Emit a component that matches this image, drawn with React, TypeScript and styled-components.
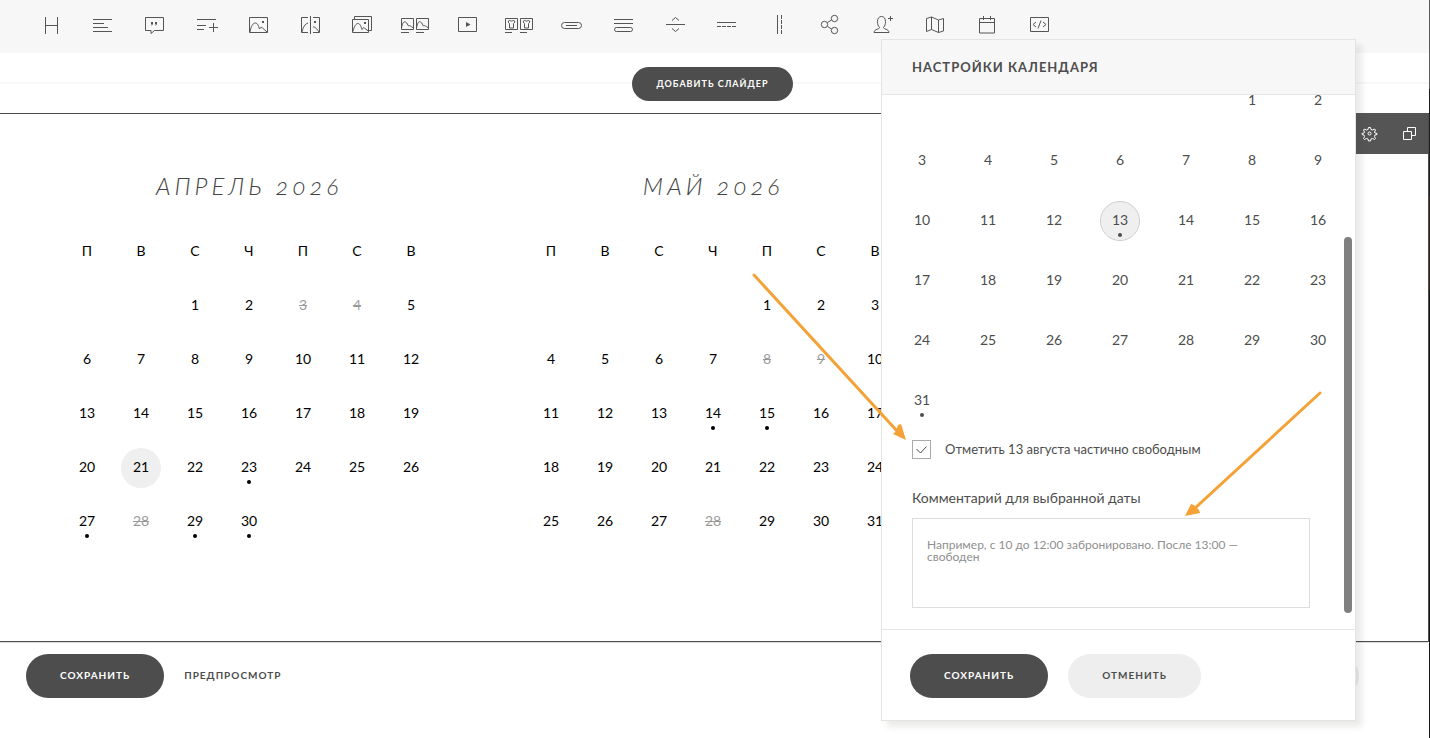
import React, { useState } from "react";
import styled, { createGlobalStyle } from "styled-components";

const GlobalStyle = createGlobalStyle`
  *, *::before, *::after { box-sizing: border-box; }
  body {
    margin: 0;
    background: #fff;
    color: #4d4d4d;
    font-family: Lato, "Open Sans", "Liberation Sans", sans-serif;
    font-size: 14px;
  }
  button { font-family: inherit; border: 0; padding: 0; cursor: pointer; }
`;

const Page = styled.div`
  position: relative;
  min-height: 100vh;
  overflow: hidden;
  padding-right: 1px;
  background: linear-gradient(#5c5c5c 0 89px, #1d1d1d 89px 196px, #3a2420 196px 290px, #151515 290px) right / 1px 100% no-repeat;
`;

const Toolbar = styled.header`
  display: flex;
  height: 53px;
  padding-left: 26px;
  background: #f7f7f7;
`;

const ToolButton = styled.button`
  width: 52px;
  height: 50px;
  background: none;
  color: #555;

  svg {
    display: block;
    fill: none;
    stroke: currentColor;
    stroke-width: 1;
  }
`;

const SliderBar = styled.div`
  display: flex;
  align-items: center;
  justify-content: center;
  height: 60px;
  padding: 2px 4px 0 0;
  background: linear-gradient(#f7f7f7, #f7f7f7) 0 29px / 100% 2px no-repeat;
`;

const PillButton = styled.button<{ $tone?: "dark" | "light"; $small?: boolean }>`
  height: ${(p) => (p.$small ? 34 : 44)}px;
  padding: 0 ${(p) => (p.$small ? 24 : 34)}px 2px;
  border-radius: 22px;
  background: ${(p) => (p.$tone === "light" ? "#eee" : "#4d4d4d")};
  color: ${(p) => (p.$tone === "light" ? "#4d4d4d" : "#fff")};
  font-size: ${(p) => (p.$small ? 9 : 10)}px;
  font-weight: 700;
  letter-spacing: 1px;
  text-transform: uppercase;
  white-space: nowrap;
`;

const Section = styled.section`
  position: relative;
  min-height: 529px;
  padding: 54px 0 60px 60px;
  border: 1px solid #4d4d4d;
  border-left: 0;
`;

const Months = styled.div`
  display: flex;
  gap: 86px;
`;

const Month = styled.div`
  flex: none;
  width: 378px;
`;

const MonthTitle = styled.h2`
  margin: 0 0 20px;
  color: #444;
  font-size: 24px;
  font-style: italic;
  font-weight: 300;
  font-variant-numeric: oldstyle-nums;
  line-height: 36px;
  letter-spacing: 4px;
  text-align: center;
  text-transform: uppercase;
`;

const Grid = styled.table<{ $col: number; $row: number }>`
  width: ${(p) => p.$col * 7}px;
  border-collapse: collapse;
  table-layout: fixed;

  th, td {
    height: ${(p) => p.$row}px;
    padding: 0;
    font-weight: 400;
    text-align: center;
    vertical-align: middle;
  }
  th { padding-bottom: 2px; }
  td { padding-top: 2px; }
`;

const Weekday = styled.span`
  color: #000;
  font-size: 14px;
`;

const Day = styled.button<{ $busy?: boolean; $partial?: boolean; $active?: boolean; $outlined?: boolean }>`
  position: relative;
  display: block;
  width: 40px;
  height: 40px;
  margin: 0 auto;
  padding-bottom: 3px;
  border: 1px solid ${(p) => (p.$outlined ? "#ccc" : "transparent")};
  border-radius: 50%;
  background: ${(p) => (p.$active ? "#efefef" : "none")};
  background-clip: ${(p) => (p.$outlined ? "padding-box" : "border-box")};
  color: inherit;
  font-size: 14px;
  line-height: 20px;
  opacity: ${(p) => (p.$busy ? 0.4 : 1)};
  text-decoration: ${(p) => (p.$busy ? "line-through" : "none")};

  &::after {
    content: ${(p) => (p.$partial ? '""' : "none")};
    position: absolute;
    left: 17px;
    bottom: 3px;
    width: 4px;
    height: 4px;
    border-radius: 50%;
    background: currentColor;
  }
`;

const PublicGrid = styled(Grid)`
  color: #000;
`;

const BlockTools = styled.div`
  position: absolute;
  top: -1px;
  right: 0;
  display: flex;
  background: #555;
`;

const BlockTool = styled.button`
  width: 40px;
  height: 41px;
  background: none;
  color: #fff;

  svg {
    display: block;
    fill: none;
    stroke: currentColor;
  }
`;

const BottomBar = styled.footer`
  display: flex;
  align-items: center;
  gap: 20px;
  margin-right: 1px;
  padding: 11px 69px 40px 26px;
  border-top: 1px solid #ddd;
`;

const TextLink = styled.a`
  padding-bottom: 2px;
  color: #4d4d4d;
  font-size: 10px;
  font-weight: 700;
  letter-spacing: 1px;
  text-decoration: none;
  text-transform: uppercase;
`;

const Spacer = styled.div`
  flex: 1;
`;

const Panel = styled.aside`
  position: absolute;
  top: 39px;
  right: 74px;
  display: flex;
  flex-direction: column;
  width: 475px;
  height: 682px;
  border: 1px solid #e4e4e4;
  background: #fff;
  box-shadow: 6px 6px 6px rgba(60, 60, 40, 0.1);
`;

const PanelHeader = styled.h1`
  margin: 0;
  padding: 0 30px;
  border-bottom: 1px solid #e4e4e4;
  background: #f7f7f7;
  font-size: 13px;
  font-weight: 700;
  line-height: 54px;
  letter-spacing: 1px;
  text-transform: uppercase;
`;

const PanelBody = styled.div`
  position: relative;
  display: flex;
  flex: 1;
  flex-direction: column;
  justify-content: flex-end;
  min-height: 0;
  overflow: hidden;
  padding-bottom: 21px;

  > * { flex: none; }
`;

const PanelGridWrap = styled.div`
  padding-left: 7px;
`;

const ScrollThumb = styled.div`
  position: absolute;
  right: 3px;
  bottom: 16px;
  width: 8px;
  height: 376px;
  border-radius: 4px;
  background: #808080;
`;

const CheckRow = styled.label`
  display: flex;
  align-items: center;
  gap: 14px;
  margin: 10px 30px 0;
  font-size: 13px;
  line-height: 19px;
`;

const CheckBox = styled.span`
  display: grid;
  width: 19px;
  height: 19px;

  input, svg { grid-area: 1 / 1; }
  input {
    appearance: none;
    width: 19px;
    height: 19px;
    margin: 0;
    border: 1px solid #aaa;
  }
  svg {
    fill: none;
    stroke: #4d4d4d;
    pointer-events: none;
    visibility: hidden;
  }
  input:checked + svg { visibility: visible; }
`;

const FieldLabel = styled.label`
  margin: 29px 30px 0;
  font-size: 14px;
  line-height: 20px;
`;

const Comment = styled.textarea`
  display: block;
  width: 398px;
  height: 90px;
  margin: 10px 30px 0;
  padding: 20px 50px 0 14px;
  border: 1px solid #ddd;
  border-radius: 0;
  outline: 0;
  background: #fff;
  color: #4d4d4d;
  font-family: inherit;
  font-size: 12px;
  line-height: 12px;
  resize: none;

  &::placeholder { color: #8f8f8f; opacity: 1; }
`;

const PanelFooter = styled.div`
  display: flex;
  gap: 20px;
  padding: 24px 28px 22px;
  border-top: 1px solid #e4e4e4;
`;

const Arrows = styled.svg`
  position: absolute;
  top: 260px;
  right: 99px;
  pointer-events: none;
`;

const hill = "M0 0c1-5 3-8 5-8s3 3 4 6c1-2 2-2 3-1s3 2 4 3";
const smallHill = "M0 1c1-5 2-7 4-6s2 3 3 4c1-1 2 0 5 2";
const shirt = "M2 .5L.5 2.500l1.500 1.500v4.500h4V4l1.500-1.500L6 .5C5.500 2 2.500 2 2 .5z";

const tools: { name: string; art: React.ReactNode }[] = [
  { name: "Заголовок", art: <path d="M19.500 17v17M31.500 17v17M19.500 25.500h12" /> },
  { name: "Текст", art: <path d="M15 19.500h19M15 23.500h11M15 27.500h15M15 31.500h19" /> },
  {
    name: "Цитата",
    art: (
      <>
        <path d="M15.500 17.500h18v13h-9l-3.500 3v-3h-5.500z" />
        <path d="M21 22h2v2l-1.500 2v-2H21zM25 22h2v2l-1.500 2v-2H25z" fill="currentColor" stroke="none" />
      </>
    ),
  },
  { name: "Список", art: <path d="M15 19.500h19M15 25.500h9M15 29.500h7M27 27.500h9M31.500 23v9" /> },
  {
    name: "Изображение",
    art: (
      <>
        <path d="M15.500 17.500h18v15h-18z" />
        <path d="M16 32c1-6 3-9 5.500-9 2 0 3 3 4 6 1-2 2-2 3-1l4.500 4" />
        <path d="M28 21h2v2h-2z" fill="currentColor" stroke="none" />
      </>
    ),
  },
  {
    name: "Сравнение",
    art: (
      <>
        <path d="M22 17.500h-6.500v15H22M27 17.500h6.500v15H27M24.500 16v18M16 32c1-5 3-8 6-9M27 27c2-.5 4 2 6 5" />
        <path d="M28 21h2v2h-2z" fill="currentColor" stroke="none" />
      </>
    ),
  },
  {
    name: "Галерея",
    art: (
      <>
        <path d="M14.500 19.500h16v13h-16zM16.500 19v-2.500h17v14H31" />
        <path d={hill} transform="translate(15 31.500)" />
        <path d="M26 22h2v2h-2z" fill="currentColor" stroke="none" />
      </>
    ),
  },
  {
    name: "Карточки",
    art: (
      <>
        <path d="M11.500 18.500h12v11h-12zM26.500 18.500h12v11h-12zM11 32.500h8M26 32.500h8" />
        <path d={smallHill} transform="translate(11.500 27)" />
        <path d={smallHill} transform="translate(26.500 27)" />
      </>
    ),
  },
  {
    name: "Видео",
    art: (
      <>
        <path d="M16.500 17.500h18v14h-18z" />
        <path d="M24 22l4.500 2.500L24 27z" fill="currentColor" stroke="none" />
      </>
    ),
  },
  {
    name: "Товары",
    art: (
      <>
        <path d="M11.500 18.500h12v11h-12zM26.500 18.500h12v11h-12zM11 32.500h7M26 32.500h7" />
        <path d={shirt} transform="translate(13.500 19.500)" />
        <path d={shirt} transform="translate(28.500 19.500)" />
      </>
    ),
  },
  {
    name: "Кнопка",
    art: (
      <>
        <rect x="15.500" y="22.500" width="20" height="6" rx="3" />
        <path d="M20 25.500h11" />
      </>
    ),
  },
  {
    name: "Форма",
    art: (
      <>
        <path d="M16 19.500h19M16 23.500h19" />
        <rect x="16.500" y="27.500" width="18" height="4" rx="2" />
      </>
    ),
  },
  { name: "Отступ", art: <path d="M16 24.500h19M22 20.500l3.500-3 3.500 3M22 28.500l3.500 3 3.500-3" /> },
  { name: "Разделитель", art: <path d="M15 22.500h19M15 26.500h4M20 26.500h4M25 26.500h4M30 26.500h4" /> },
  { name: "Колонки", art: <path d="M23.500 15v19M27.500 15v4M27.500 20v4M27.500 25v4M27.500 30v4" /> },
  {
    name: "Соцсети",
    art: (
      <>
        <circle cx="18.500" cy="24.500" r="3.200" />
        <circle cx="28.500" cy="18.500" r="3.200" />
        <circle cx="28.500" cy="30.500" r="3.200" />
        <path d="M21.500 22.500l4-2.500M21.500 26.500l4 2.500" />
      </>
    ),
  },
  {
    name: "Подписка",
    art: (
      <path d="M21.500 27.500c-1.500-2-2-3-2-6 0-3 1.500-5 4-5s4 2 4 5c0 3-.5 4-2 6 0 2 5 1 5.500 5H16c.5-4 5.500-3 5.500-5zM30 18.500h5M32.500 16v5" />
    ),
  },
  { name: "Карта", art: <path d="M16.500 18.500l5-1.500 7 3 5-1.500v12.500l-5 1.500-7-3-5 2zM21.500 17v12.500M28.500 20v12.500" /> },
  { name: "Календарь", art: <path d="M17.500 18.500h15v14.500h-15zM17.500 22.500h15M21.500 16v4M28.500 16v4" /> },
  {
    name: "HTML",
    art: <path d="M16.500 17.500h18v14h-18zM22 22l-3 2.500 3 2.500M29 22l3 2.500-3 2.500M27 20.500l-3 8" />,
  },
];

type MonthData = { title: string; offset: number; days: number; busy: number[]; partial: number[]; active?: number };

const months: MonthData[] = [
  { title: "Апрель 2026", offset: 2, days: 30, busy: [3, 4, 28], partial: [23, 27, 29, 30], active: 21 },
  { title: "Май 2026", offset: 4, days: 31, busy: [8, 9, 28], partial: [14, 15] },
];

const weekdays = ["П", "В", "С", "Ч", "П", "С", "В"];

function weeksOf(offset: number, days: number): (number | null)[][] {
  const count = Math.ceil((offset + days) / 7);
  return Array.from({ length: count }, (_, w) =>
    Array.from({ length: 7 }, (_, d) => {
      const n = w * 7 + d - offset + 1;
      return n > 0 && n <= days ? n : null;
    })
  );
}

function MonthView({ data }: { data: MonthData }) {
  return (
    <Month>
      <MonthTitle>{data.title}</MonthTitle>
      <PublicGrid $col={54} $row={54}>
        <thead>
          <tr>
            {weekdays.map((d, i) => (
              <th key={i} scope="col"><Weekday>{d}</Weekday></th>
            ))}
          </tr>
        </thead>
        <tbody>
          {weeksOf(data.offset, data.days).map((week, w) => (
            <tr key={w}>
              {week.map((n, i) => (
                <td key={i}>
                  {n && (
                    <Day $busy={data.busy.includes(n)} $partial={data.partial.includes(n)} $active={data.active === n}>
                      {n}
                    </Day>
                  )}
                </td>
              ))}
            </tr>
          ))}
        </tbody>
      </PublicGrid>
    </Month>
  );
}

function SettingsPanel() {
  const [selected, setSelected] = useState(13);
  const [partial, setPartial] = useState([13, 31]);
  const toggle = () =>
    setPartial((list) => (list.includes(selected) ? list.filter((n) => n !== selected) : [...list, selected]));

  return (
    <Panel>
      <PanelHeader>Настройки календаря</PanelHeader>
      <PanelBody>
        <PanelGridWrap>
          <Grid $col={66} $row={60}>
            <tbody>
              {weeksOf(5, 31).map((week, w) => (
                <tr key={w}>
                  {week.map((n, i) => (
                    <td key={i}>
                      {n && (
                        <Day
                          $partial={partial.includes(n)}
                          $active={selected === n}
                          $outlined={selected === n}
                          onClick={() => setSelected(n)}
                        >
                          {n}
                        </Day>
                      )}
                    </td>
                  ))}
                </tr>
              ))}
            </tbody>
          </Grid>
        </PanelGridWrap>
        <CheckRow>
          <CheckBox>
            <input type="checkbox" checked={partial.includes(selected)} onChange={toggle} />
            <svg width="19" height="19" viewBox="0 0 19 19"><path d="M4.500 9l4 4 6-6.500" /></svg>
          </CheckBox>
          Отметить {selected} августа частично свободным
        </CheckRow>
        <FieldLabel htmlFor="comment">Комментарий для выбранной даты</FieldLabel>
        <Comment id="comment" placeholder="Например, с 10 до 12:00 забронировано. После 13:00 — свободен" />
        <ScrollThumb />
      </PanelBody>
      <PanelFooter>
        <PillButton>Сохранить</PillButton>
        <PillButton $tone="light">Отменить</PillButton>
      </PanelFooter>
    </Panel>
  );
}

export default function App() {
  return (
    <Page>
      <GlobalStyle />
      <Toolbar>
        {tools.map((tool) => (
          <ToolButton key={tool.name} aria-label={tool.name}>
            <svg width="52" height="50" viewBox="0 0 52 50">{tool.art}</svg>
          </ToolButton>
        ))}
      </Toolbar>
      <SliderBar>
        <PillButton $small>Добавить слайдер</PillButton>
      </SliderBar>
      <Section>
        <Months>
          {months.map((m) => (
            <MonthView key={m.title} data={m} />
          ))}
        </Months>
        <BlockTools>
          <BlockTool aria-label="Настройки">
            <svg width="40" height="41" viewBox="-1 0 40 41">
              <path d="M19.500 14.500h2l.5 2 1.500.5 2-1 1 1-1 2 .5 1 2 .5v1l-2 .5-.5 1.500 1 2-1 1-2-1-1.500.5-.5 2h-2l-.5-2-1.500-.5-2 1-1-1 1-2-.5-1.500-2-.5v-1l2-.5.5-1-1-2 1-1 2 1 1.500-.5z" strokeLinejoin="round" />
              <circle cx="20.500" cy="20.500" r="1.500" />
            </svg>
          </BlockTool>
          <BlockTool aria-label="Дублировать">
            <svg width="40" height="41" viewBox="-1 0 40 41">
              <path d="M14.500 18.500h8v8h-8zM18.500 18.500v-4h8v8h-4" />
            </svg>
          </BlockTool>
        </BlockTools>
      </Section>
      <BottomBar>
        <PillButton>Сохранить</PillButton>
        <TextLink href="#preview">Предпросмотр</TextLink>
        <Spacer />
        <PillButton $tone="light">Отменить</PillButton>
      </BottomBar>
      <SettingsPanel />
      <Arrows width="581" height="260" viewBox="0 0 581 260">
        <g fill="none" stroke="#f4a236" strokeWidth="3" strokeLinecap="round">
          <path d="M4 15l144 157M570 133L444 249" />
        </g>
        <g fill="#f4a236">
          <path d="M156 180l-13-6 3-3 2-6 3-1z" />
          <path d="M435 256l6-12 3 1 5 5 1 3z" />
        </g>
      </Arrows>
    </Page>
  );
}
